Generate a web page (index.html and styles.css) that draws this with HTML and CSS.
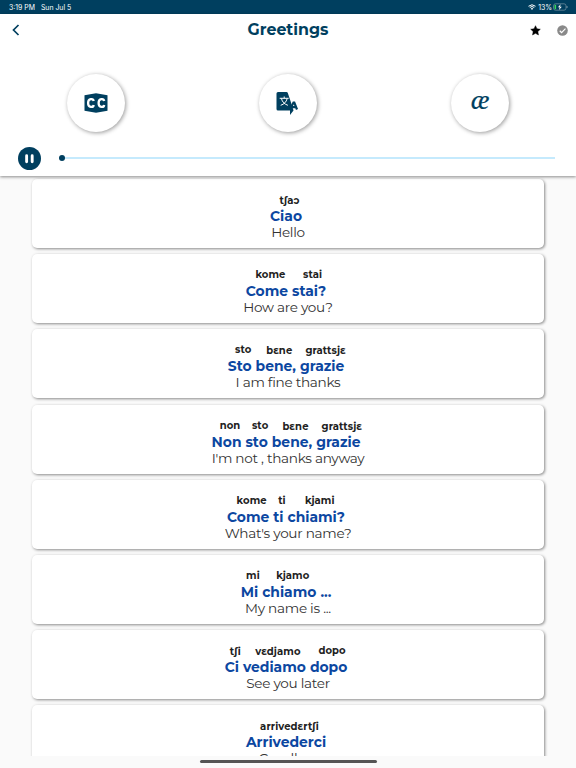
FILE: index.html
```
<!DOCTYPE html>
<html lang="en">
<head>
    <meta charset="UTF-8">
    <meta name="viewport" content="width=device-width, initial-scale=1.0">
    <title>Greetings</title>
    <link rel="stylesheet" href="styles.css">
</head>
<body>
    <div class="status-bar">
        <span>3:19 PM</span>
        <span class="date">Sun Jul 5</span>
        <svg class="wifi" viewBox="0 0 16 12"><path d="M1 4.5Q8-1.5 15 4.5M3.5 7Q8 3 12.5 7" fill="none" stroke="#fff" stroke-width="2"/><path d="M5.5 8.8Q8 6.8 10.5 8.8L8 12z" fill="#fff"/></svg>
        <span>13%</span>
        <svg class="battery" viewBox="0 0 15 8"><rect x=".5" y=".8" width="12.5" height="6.4" rx="2" fill="none" stroke="#7895a5" stroke-width=".7"/><rect x="1.5" y="1.8" width="1.6" height="4.4" fill="#3bd45c"/><path d="M7.6 1.2L4.9 4.3h1.7L6 6.9l2.8-3.2H7.1z" fill="#fff"/><path d="M14 3v2" stroke="#7895a5"/></svg>
    </div>

    <header class="header">
        <div class="nav">
            <svg class="back" viewBox="0 0 8 12"><path d="M6.5 1L1.5 6l5 5" fill="none" stroke="#003f5f" stroke-width="1.7"/></svg>
            <h1>Greetings</h1>
            <svg class="star" viewBox="0 0 24 24"><path d="M12 1.5l3.2 6.8 7.3 1-5.4 5.1 1.4 7.4-6.5-3.6-6.5 3.6 1.4-7.4L1.5 9.3l7.3-1z" fill="#000" stroke="#000" stroke-linejoin="round"/></svg>
            <svg class="check" viewBox="0 0 24 24"><circle cx="12" cy="12" r="11.5" fill="#898989"/><path d="M6 12.5l4 4 8.5-8.5" fill="none" stroke="#fff" stroke-width="2.6"/></svg>
        </div>

        <div class="tools">
            <div class="tool">
                <svg width="24" height="20" viewBox="0 0 24 20"><path d="M.5 2.2L12 .2l11.5 2v15.6L12 19.8l-11.5-2z" fill="#003f5f"/><path d="M9.7 8C9.3 5.4 4.1 5 4.1 10s5.2 4.6 5.6 2M20.2 8c-.4-2.6-5.6-3-5.6 2s5.2 4.6 5.6 2" fill="none" stroke="#fff" stroke-width="2.3"/></svg>
            </div>
            <div class="tool">
                <svg width="24" height="24" viewBox="0 0 24 24"><path d="M2 1h8.5q1 0 1.3 1l2.7 8 3 9.5L14 24v-4.500H2Q.5 19.500.5 18V2.500Q.5 1 2 1z" fill="#003f5f"/><path d="M3.700 7.300h9M8.200 5.500v1.800M5.400 7.500c.8 3.500 3.200 5.700 6.500 6.800M11.200 7.500c-.8 3.500-3.200 5.700-6.500 6.800" fill="none" stroke="#fff"/><path d="M14 18.500l3.500-7h.8l2.700 7M16 16.200h4.500" fill="none" stroke="#003f5f" stroke-width="2.200"/></svg>
            </div>
            <div class="tool ae">æ</div>
        </div>

        <div class="player">
            <svg class="pause" viewBox="0 0 24 24"><circle cx="12" cy="12" r="12" fill="#003f5f"/><path d="M9 9v6.5M14.8 9v6.5" stroke="#fff" stroke-width="3" stroke-linecap="round"/></svg>
            <div class="track"></div>
        </div>
    </header>

    <main class="list">
        <div class="card">
            <div class="phrase"><div><small class="low">tʃaɔ</small><b>Ciao</b></div></div>
            <p>Hello</p>
        </div>
        <div class="card">
            <div class="phrase"><div><small>kome</small><b>Come</b></div><div><small>stai</small><b>stai?</b></div></div>
            <p>How are you?</p>
        </div>
        <div class="card">
            <div class="phrase"><div><small>sto</small><b>Sto</b></div><div><small class="low">bɛne</small><b>bene,</b></div><div><small class="low">grattsjɛ</small><b>grazie</b></div></div>
            <p>I am fine thanks</p>
        </div>
        <div class="card">
            <div class="phrase"><div><small>non</small><b>Non</b></div><div><small>sto</small><b>sto</b></div><div><small class="low">bɛne</small><b>bene,</b></div><div><small class="low">grattsjɛ</small><b>grazie</b></div></div>
            <p>I'm not , thanks anyway</p>
        </div>
        <div class="card">
            <div class="phrase"><div><small>kome</small><b>Come</b></div><div><small>ti</small><b>ti</b></div><div><small>kjami</small><b>chiami?</b></div></div>
            <p>What's your name?</p>
        </div>
        <div class="card">
            <div class="phrase"><div><small>mi</small><b>Mi</b></div><div><small>kjamo</small><b>chiamo</b></div><div><small></small><b>...</b></div></div>
            <p>My name is ...</p>
        </div>
        <div class="card">
            <div class="phrase"><div><small class="low">tʃi</small><b>Ci</b></div><div><small class="low">vɛdjamo</small><b>vediamo</b></div><div><small>dopo</small><b>dopo</b></div></div>
            <p>See you later</p>
        </div>
        <div class="card">
            <div class="phrase"><div><small class="low">arrivedɛrtʃi</small><b>Arrivederci</b></div></div>
            <p>Goodbye</p>
        </div>
    </main>

    <footer class="home"><div></div></footer>
</body>
</html>
```
FILE: styles.css
```
* {
    box-sizing: border-box;
}
body {
    margin: 0;
    height: 768px;
    display: flex;
    flex-direction: column;
    overflow: hidden;
    background: #fafafa;
    font-family: Montserrat, Inter, sans-serif;
}
.status-bar {
    display: flex;
    align-items: center;
    flex: none;
    height: 14px;
    padding: 0 8px 0 9px;
    background: #003f5f;
    color: #fff;
    font: 400 6.9px Inter, sans-serif;
}
.date {
    margin: 0 auto 0 6px;
}
.wifi {
    width: 8px;
    height: 6px;
    margin-right: 2px;
}
.battery {
    width: 15px;
    height: 8px;
    margin-left: 1px;
}

/* Header */
.header {
    position: relative;
    flex: none;
    height: 162px;
    background: #fff;
    box-shadow: 0 1px 3px rgba(0, 0, 0, 0.45);
}
.nav {
    display: grid;
    grid-template-columns: 60px 1fr 21px 39px;
    align-items: center;
    height: 32px;
}
.back {
    width: 8px;
    height: 12px;
    margin-left: 12px;
}
h1 {
    margin: 0 0 1px;
    text-align: center;
    color: #003f5f;
    font-size: 15.8px;
    font-weight: 700;
}
.star {
    width: 11px;
    height: 11px;
    margin-left: 14px;
}
.check {
    width: 11px;
    height: 11px;
    justify-self: end;
    margin-right: 8px;
}
.tools {
    display: grid;
    grid-template-columns: repeat(3, 1fr);
    justify-items: center;
    padding-top: 28px;
}
.tool {
    display: flex;
    align-items: center;
    justify-content: center;
    width: 58px;
    height: 58px;
    border-radius: 50%;
    background: #fff;
    box-shadow: 1px 1px 4px rgba(0, 0, 0, 0.4);
}
.ae {
    color: #003f5f;
    font: italic 28px/52px "Liberation Serif", serif;
    -webkit-text-stroke: 0.2px #003f5f;
    align-items: flex-start;
}
.player {
    display: flex;
    align-items: center;
    padding: 14.5px 21px 0 18px;
}
.pause {
    width: 23px;
    height: 23px;
}
.track {
    display: flex;
    align-items: center;
    flex: 1;
    height: 2px;
    margin-left: 18px;
    background: #c5eafd;
}
.track::before {
    content: "";
    width: 6px;
    height: 6px;
    border-radius: 50%;
    background: #003f5f;
}

/* Phrases */
.list {
    display: flex;
    flex-direction: column;
    gap: 6.15px;
    flex: 1;
    min-height: 0;
    overflow: hidden;
    padding: 3.1px 32px 0;
}
.card {
    flex: none;
    height: 69px;
    padding-top: 13px;
    border-radius: 5px;
    background: #fff;
    box-shadow: 1px 1px 3px rgba(0, 0, 0, 0.45);
    text-align: center;
}
.phrase {
    display: flex;
    justify-content: center;
}
.phrase small {
    display: block;
    height: 15px;
    padding-left: 3px;
    color: #222;
    font-size: 10px;
    font-weight: 700;
    line-height: 15px;
    letter-spacing: 0.1px;
}
.phrase .low {
    padding-top: 1px;
}
.phrase b {
    display: block;
    padding-right: 4px;
    color: #0c47a1;
    font-size: 13.9px;
    line-height: 18px;
}
.card p {
    margin: -1px 0 0;
    color: #333;
    font-size: 13.6px;
    line-height: 16px;
    letter-spacing: -0.28px;
}
.home {
    display: flex;
    justify-content: center;
    flex: none;
    height: 12px;
    padding-top: 4px;
}
.home div {
    width: 177px;
    height: 3px;
    border-radius: 2px;
    background: #555;
}
```
